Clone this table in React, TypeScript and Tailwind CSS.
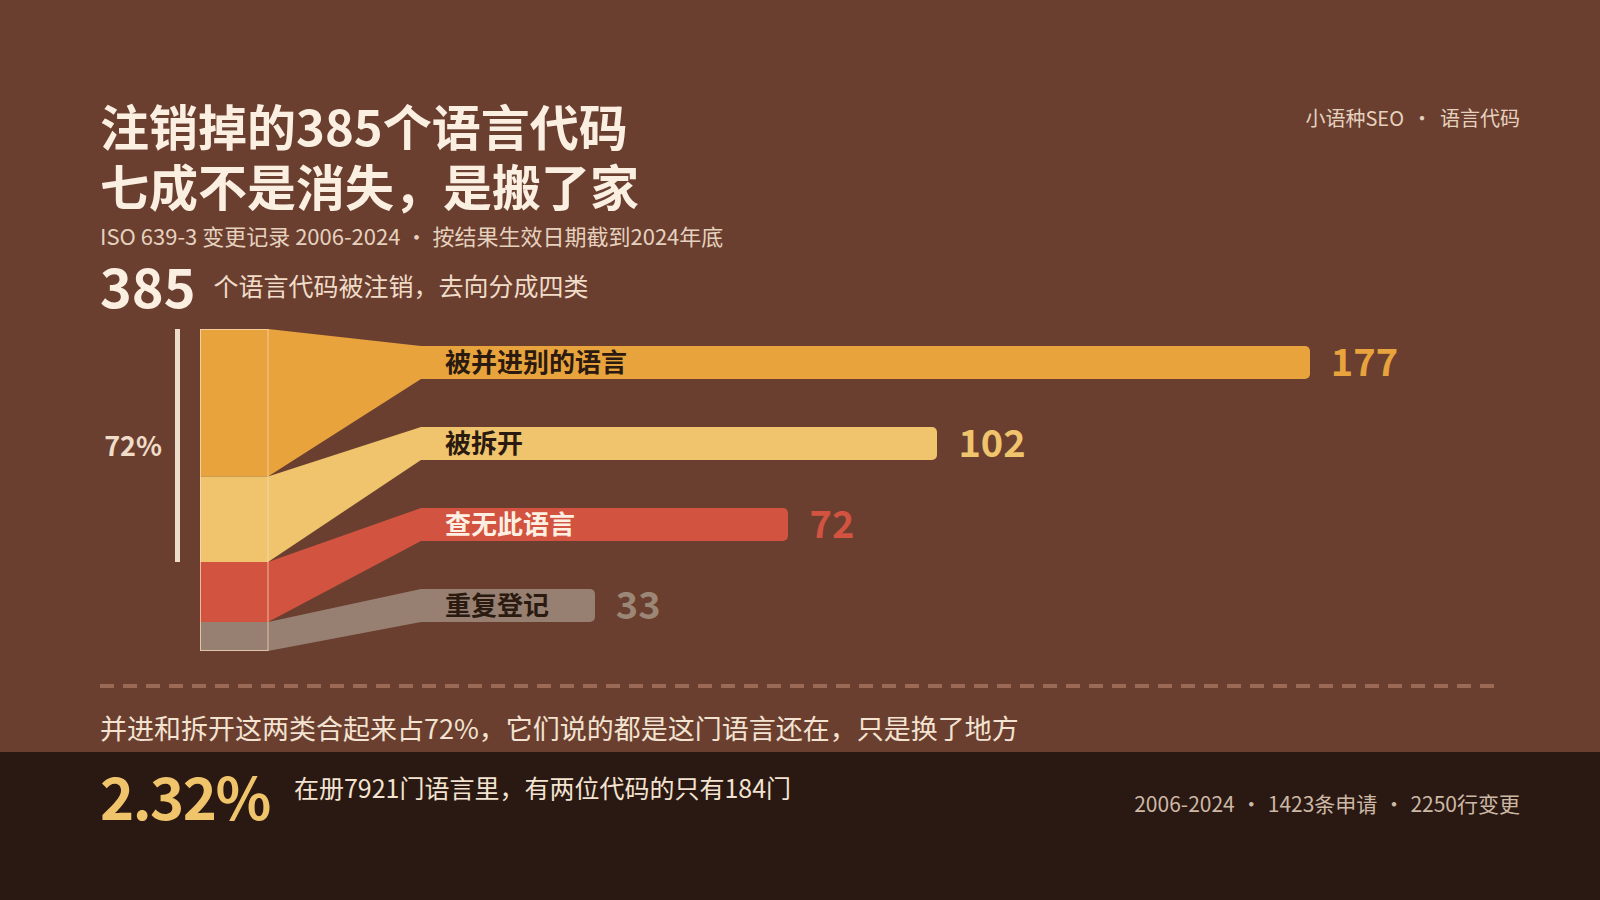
const rows = [
  { label: "被并进别的语言", value: 177, bar: "bg-[#e8a33d]", text: "text-[#2b1a10]", num: "text-[#e8a33d]" },
  { label: "被拆开", value: 102, bar: "bg-[#f0c46c]", text: "text-[#2b1a10]", num: "text-[#f0c46c]" },
  { label: "查无此语言", value: 72, bar: "bg-[#d15340]", text: "text-[#fdf0e2]", num: "text-[#d15340]" },
  { label: "重复登记", value: 33, bar: "bg-[#978072]", text: "text-[#2b1a10]", num: "text-[#9c8676]" },
];

function Dot({ className = "mx-[6px]" }: { className?: string }) {
  return <span className={className}>·</span>;
}

function Flow() {
  // stacked column (0..68) + ribbons to bar starts (x=221)
  const segs = [
    { y0: 0, y1: 147.5, b0: 17, b1: 50, fill: "#e8a33d" },
    { y0: 147.5, y1: 233, b0: 98, b1: 131, fill: "#f0c46c" },
    { y0: 233, y1: 293, b0: 179, b1: 212, fill: "#d15340" },
    { y0: 293, y1: 322, b0: 260, b1: 293, fill: "#978072" },
  ];
  return (
    <svg width="221" height="322" viewBox="0 0 221 322" className="shrink-0">
      {segs.map((s, i) => (
        <g key={i}>
          <rect x="0" y={s.y0} width="68.5" height={s.y1 - s.y0} fill={s.fill} />
          <polygon
            points={`68,${s.y0} 221,${s.b0} 221,${s.b1} 68,${s.y1}`}
            fill={s.fill}
          />
        </g>
      ))}
      <rect x="0.5" y="0.5" width="67.5" height="321" fill="none" stroke="#f6dcbc" strokeOpacity="0.75" strokeWidth="1" />
    </svg>
  );
}

export default function App() {
  return (
    <div className="w-[1600px] h-[900px] flex flex-col bg-[#6a3f30] font-['Noto_Sans_CJK_SC',sans-serif] overflow-hidden">
      <div className="h-[752px] shrink-0 pl-[100px] pr-[80px] pt-[95px] flex flex-col">
        <header className="flex justify-between items-start">
          <div>
            <h1 className="text-[49px] leading-[60px] font-bold text-[#fbefe2]">
              注销掉的385个语言代码
              <br />
              七成不是消失，是搬了家
            </h1>
            <p className="mt-[6px] text-[22px] leading-[28px] text-[#e6d1be]">
              ISO 639-3 变更记录 2006-2024<Dot className="mx-[5px]" />按结果生效日期截到2024年底
            </p>
          </div>
          <div className="mt-[9px] text-[20px] leading-[28px] text-[#e6d1be]">
            小语种SEO<Dot className="mx-[8px]" />语言代码
          </div>
        </header>

        <div className="mt-[9px] flex items-center gap-[18px]">
          <span className="text-[54px] leading-[54px] font-bold text-[#fbefe2]">385</span>
          <span className="text-[25px] leading-[34px] text-[#f0dcc8]">个语言代码被注销，去向分成四类</span>
        </div>

        <div className="mt-[17px] flex h-[322px]">
          <div className="w-[62px] h-[233px] flex items-center justify-end text-[27px] font-semibold text-[#f0dcc8]">
            72%
          </div>
          <div className="ml-[13px] w-[5px] h-[233px] bg-[#eddccb]" />
          <div className="ml-[20px]">
            <Flow />
          </div>
          <div className="flex flex-col pt-[17px] gap-[48px]">
            {rows.map((r) => (
              <div key={r.label} className="flex items-center h-[33px]">
                <div
                  className={`${r.bar} h-[33px] rounded-r-[5px] flex items-center pl-[24px]`}
                  style={{ width: 10 + r.value * 4.965 }}
                >
                  <span className={`${r.text} text-[26px] font-bold leading-none whitespace-nowrap pb-[3px]`}>{r.label}</span>
                </div>
                <span className={`${r.num} ml-[21px] text-[38px] font-bold leading-none pb-[5px]`}>{r.value}</span>
              </div>
            ))}
          </div>
        </div>

        <div className="mt-[33px] h-[4px] w-[1400px] bg-[repeating-linear-gradient(90deg,#9b6a57_0px,#9b6a57_14px,transparent_14px,transparent_23px)]" />

        <p className="mt-[22px] text-[27px] leading-[36px] text-[#f3e3d0]">
          并进和拆开这两类合起来占72%，它们说的都是这门语言还在，只是换了地方
        </p>
      </div>

      <div className="flex-1 bg-[#2a1812] pl-[100px] pr-[80px] pt-[14px] flex items-start justify-between">
        <div className="flex items-start">
          <span className="text-[58px] leading-none font-bold tracking-[-1.5px] text-[#f0c46a]">2.32%</span>
          <span className="ml-[24px] mt-[4px] text-[25px] leading-[34px] text-[#f3e3d0]">
            在册7921门语言里，有两位代码的只有184门
          </span>
        </div>
        <div className="mt-[23px] text-[21px] leading-[28px] text-[#cdb8a6]">
          2006-2024<Dot />1423条申请<Dot />2250行变更
        </div>
      </div>
    </div>
  );
}
